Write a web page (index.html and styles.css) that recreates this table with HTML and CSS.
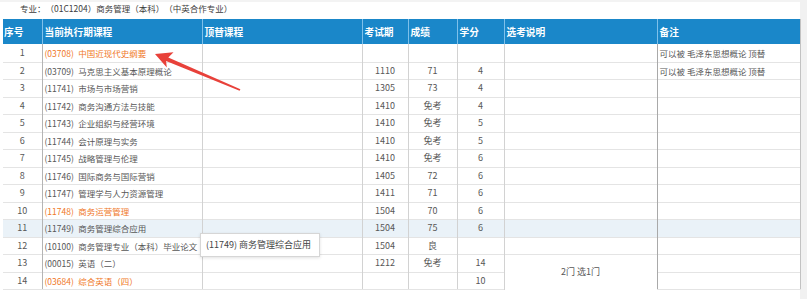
FILE: index.html
```html
<!DOCTYPE html>
<html lang="zh-CN">
<head>
<meta charset="utf-8">
<title>课程</title>
<link rel="stylesheet" href="styles.css">
</head>
<body>
<div class="page">
  <div class="main">
    <div class="title">专业：（01C1204）商务管理（本科）（中英合作专业）</div>
    <div class="grid-wrap">
      <table class="grid">
        <colgroup>
          <col class="c-no"><col class="c-course"><col class="c-course"><col class="c-term"><col class="c-score"><col class="c-credit"><col class="c-note"><col class="c-remark">
        </colgroup>
        <thead>
          <tr><th>序号</th><th>当前执行期课程</th><th>顶替课程</th><th>考试期</th><th>成绩</th><th>学分</th><th>选考说明</th><th class="remark">备注</th></tr>
        </thead>
        <tbody>
          <tr class="first"><td class="n">1</td><td class="course hl">(03708) 中国近现代史纲要</td><td></td><td class="n"></td><td class="n"></td><td class="n"></td><td></td><td class="remark">可以被 毛泽东思想概论 顶替</td></tr>
          <tr><td class="n">2</td><td class="course">(03709) 马克思主义基本原理概论</td><td></td><td class="n">1110</td><td class="n">71</td><td class="n">4</td><td></td><td class="remark">可以被 毛泽东思想概论 顶替</td></tr>
          <tr><td class="n">3</td><td class="course">(11741) 市场与市场营销</td><td></td><td class="n">1305</td><td class="n">73</td><td class="n">4</td><td></td><td class="remark"></td></tr>
          <tr><td class="n">4</td><td class="course">(11742) 商务沟通方法与技能</td><td></td><td class="n">1410</td><td class="n">免考</td><td class="n">4</td><td></td><td class="remark"></td></tr>
          <tr><td class="n">5</td><td class="course">(11743) 企业组织与经营环境</td><td></td><td class="n">1410</td><td class="n">免考</td><td class="n">5</td><td></td><td class="remark"></td></tr>
          <tr><td class="n">6</td><td class="course">(11744) 会计原理与实务</td><td></td><td class="n">1410</td><td class="n">免考</td><td class="n">5</td><td></td><td class="remark"></td></tr>
          <tr><td class="n">7</td><td class="course">(11745) 战略管理与伦理</td><td></td><td class="n">1410</td><td class="n">免考</td><td class="n">6</td><td></td><td class="remark"></td></tr>
          <tr><td class="n">8</td><td class="course">(11746) 国际商务与国际营销</td><td></td><td class="n">1405</td><td class="n">72</td><td class="n">6</td><td></td><td class="remark"></td></tr>
          <tr><td class="n">9</td><td class="course">(11747) 管理学与人力资源管理</td><td></td><td class="n">1411</td><td class="n">71</td><td class="n">6</td><td></td><td class="remark"></td></tr>
          <tr><td class="n">10</td><td class="course hl">(11748) 商务运营管理</td><td></td><td class="n">1504</td><td class="n">70</td><td class="n">6</td><td></td><td class="remark"></td></tr>
          <tr class="hover"><td class="n">11</td><td class="course">(11749) 商务管理综合应用</td><td></td><td class="n">1504</td><td class="n">75</td><td class="n">6</td><td></td><td class="remark"></td></tr>
          <tr><td class="n">12</td><td class="course">(10100) 商务管理专业（本科）毕业论文</td><td></td><td class="n">1504</td><td class="n">良</td><td class="n"></td><td></td><td class="remark"></td></tr>
          <tr><td class="n">13</td><td class="course">(00015) 英语（二）</td><td></td><td class="n">1212</td><td class="n">免考</td><td class="n">14</td><td class="n" rowspan="2">2门 选1门</td><td class="remark"></td></tr>
          <tr><td class="n">14</td><td class="course hl">(03684) 综合英语（四）</td><td></td><td class="n"></td><td class="n"></td><td class="n">10</td><td class="remark"></td></tr>
        </tbody>
      </table>
    </div>
    <div class="tip">(11749) 商务管理综合应用</div>
    <svg class="arrow" width="807" height="299" viewBox="0 0 807 299" aria-hidden="true">
      <polygon points="155,54 173.5,52.3 168.3,57.4 240.4,89.3 239.6,90.7 166.1,60.9 166.8,67.6" fill="#e8413a"/>
    </svg>
  </div>
  <div class="gutter"></div>
</div>
</body>
</html>
```

FILE: styles.css
```css
html, body {
  margin: 0;
  padding: 0;
  background: #ffffff;
}

body {
  font-family: "Noto Sans CJK SC", "Liberation Sans", sans-serif;
  color: #575757;
  text-spacing-trim: space-all;
}

.page {
  display: flex;
  height: 299px;
  overflow: hidden;
}

.main {
  position: relative;
  width: 800px;
  flex: none;
  border-top: 2px solid #f3f3f3;
}

.gutter {
  flex: 1;
  background: #f1f1f1;
}

.title {
  height: 17px;
  line-height: 12px;
  padding-left: 20px;
  font-size: 8.5px;
  color: #3c3c3c;
}

.grid-wrap {
  margin-left: 3px;
  width: 797px;
}

.grid {
  width: 797px;
  border-collapse: collapse;
  table-layout: fixed;
  font-size: 8.5px;
}

.c-no { width: 39px; }
.c-course { width: 160px; }
.c-term { width: 46px; }
.c-score { width: 49px; }
.c-credit { width: 47px; }
.c-note { width: 153px; }
.c-remark { width: 143px; }

.grid th {
  height: 25px;
  padding: 0 2px;
  background: #1a87c9;
  color: #ffffff;
  font-size: 9.7px;
  font-weight: 700;
  text-align: left;
  border-left: 1px solid #7fc0ea;
  white-space: nowrap;
}

.grid th:first-child {
  border-left: none;
  padding-left: 1px;
}

.grid td {
  height: 17.5px;
  padding: 0 2px;
  line-height: 12px;
  border-top: 1px solid #e4e4e4;
  border-left: 1px solid #d2d2d2;
  white-space: nowrap;
  overflow: hidden;
  box-sizing: border-box;
}

.grid td:first-child {
  border-left: none;
}

.grid tr.first td {
  height: 18px;
  border-top: none;
}

.grid td.n {
  text-align: center;
  font-size: 9px;
}

.grid td.course {
  border-left-color: #b4b4b4;
  word-spacing: 2.5px;
}

.grid td.remark,
.grid th.remark {
  border-right: 1px solid #c2c2c2;
}

.grid td.remark {
  border-left-color: #a9a9a9;
}

.grid tbody tr:last-child td {
  border-bottom: 1px solid #e4e4e4;
}

.grid td.hl {
  color: #f07828;
}

.grid tr.hover td {
  background: #eaf2f8;
}

.tip {
  position: absolute;
  left: 200px;
  top: 231px;
  width: 108px;
  height: 22px;
  padding: 0 5px;
  line-height: 22px;
  font-size: 9px;
  color: #444444;
  background: #ffffff;
  border: 1px solid #d6d6d6;
  box-shadow: 0 1px 3px rgba(0, 0, 0, 0.12);
  white-space: nowrap;
}

.arrow {
  position: absolute;
  left: 0;
  top: -2px;
  pointer-events: none;
}
```
